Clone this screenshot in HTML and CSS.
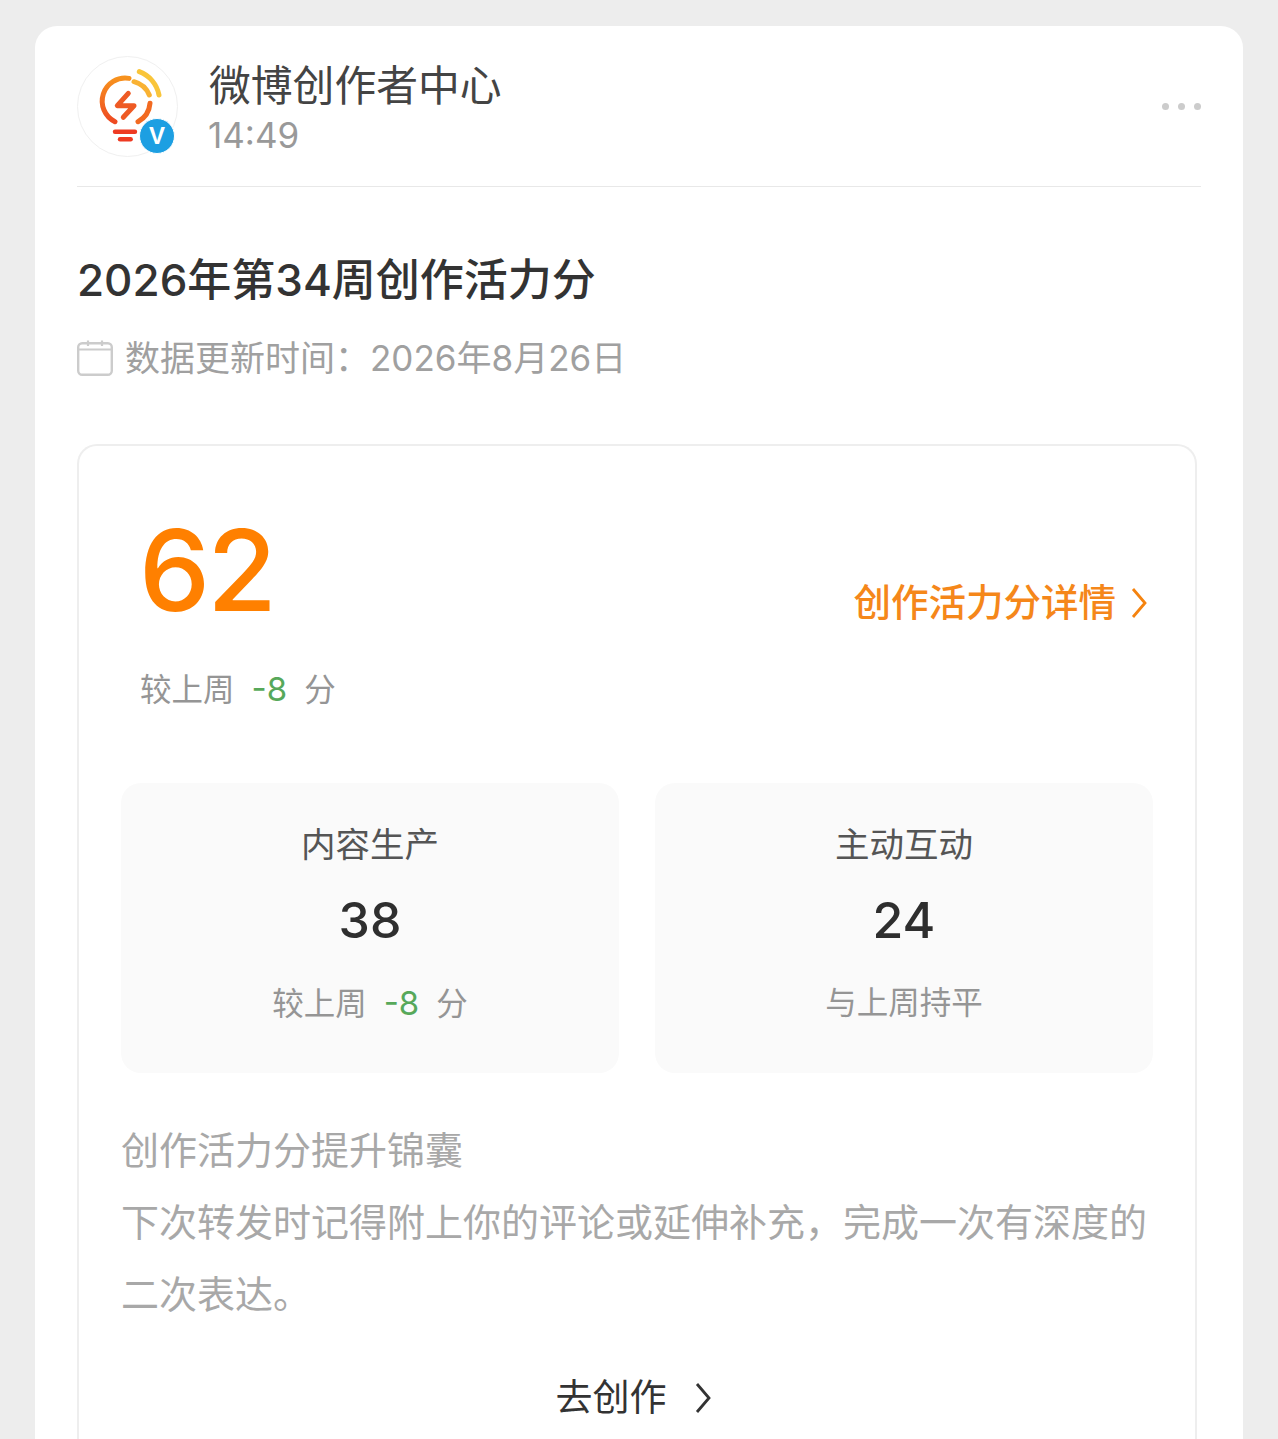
FILE: index.html
```html
<!DOCTYPE html>
<html lang="zh-CN">
<head>
    <meta charset="UTF-8">
    <title>微博创作者中心</title>
    <link rel="stylesheet" href="styles.css">
</head>
<body>
    <div id="card">
        <div class="head">
            <div class="avatar">
                <svg class="logo" viewBox="1 1 99 99" width="99" height="99">
                    <defs>
                        <linearGradient id="bulb" x1="0" y1="0" x2="0" y2="1">
                            <stop offset="0" stop-color="#f7921e"/>
                            <stop offset="1" stop-color="#ee4a22"/>
                        </linearGradient>
                    </defs>
                    <path d="M52 22.4A23 23 0 0 0 38 65.7" fill="none" stroke="url(#bulb)" stroke-width="5" stroke-linecap="round"/>
                    <path d="M61 65.7A23 23 0 0 0 73 47.3" fill="none" stroke="#f26a21" stroke-width="5" stroke-linecap="round"/>
                    <path d="M57 25.7A23 23 0 0 1 72.3 39" fill="none" stroke="#f9b233" stroke-width="5" stroke-linecap="round"/>
                    <path d="M62.3 15.7A31 31 0 0 1 82 39" fill="none" stroke="#f9c53a" stroke-width="5" stroke-linecap="round"/>
                    <path d="M51.3 37.3L40.3 49.7H57L46.3 61.3" fill="none" stroke="#ee5a24" stroke-width="5" stroke-linecap="round" stroke-linejoin="round"/>
                    <path d="M38 75.7H58" stroke="#ee3a22" stroke-width="4.4" stroke-linecap="round"/>
                    <path d="M43 83.3H53.7" stroke="#ee3a22" stroke-width="4.4" stroke-linecap="round"/>
                </svg>
                <span class="badge">V</span>
            </div>
            <div class="who">
                <div class="name">微博创作者中心</div>
                <div class="time">14:49</div>
            </div>
            <div class="more"><i></i><i></i><i></i></div>
        </div>

        <h1 class="title">2026年第34周创作活力分</h1>
        <div class="update">
            <svg viewBox="0 0 36 36" width="36" height="36">
                <rect x="1.2" y="3.2" width="33.6" height="31.6" rx="4" fill="none" stroke="#ccc" stroke-width="2.4"/>
                <path d="M1.5 9.5H34.5M11 0.5V6M25 0.5V6" fill="none" stroke="#ccc" stroke-width="2.2"/>
            </svg>
            <span>数据更新时间：2026年8月26日</span>
        </div>

        <div class="box">
            <div class="score">
                <div class="num">62</div>
                <div class="detail">创作活力分详情
                    <svg viewBox="0 0 18 32" width="18" height="32"><path d="M3 2L15 16L3 30" fill="none" stroke="#f5830f" stroke-width="2.8"/></svg>
                </div>
            </div>
            <div class="cmp">较上周<b>-8</b>分</div>

            <div class="stats">
                <div class="stat">
                    <div class="stat-name">内容生产</div>
                    <div class="stat-num">38</div>
                    <div class="cmp">较上周<b>-8</b>分</div>
                </div>
                <div class="stat">
                    <div class="stat-name">主动互动</div>
                    <div class="stat-num">24</div>
                    <div class="cmp">与上周持平</div>
                </div>
            </div>

            <div class="tips">
                <p>创作活力分提升锦囊</p>
                <p>下次转发时记得附上你的评论或延伸补充，完成一次有深度的二次表达。</p>
            </div>
            <div class="go">去创作
                <svg viewBox="0 0 18 32" width="18" height="32"><path d="M3 2L15 16L3 30" fill="none" stroke="#333" stroke-width="2.8"/></svg>
            </div>
        </div>
    </div>
</body>
</html>
```

FILE: styles.css
```css
*{margin: 0;padding: 0;box-sizing: border-box;}
html,body{height: 1439px;overflow: hidden;}
body{background: #ededed;font-family: "Inter","Noto Sans CJK SC",sans-serif;color: #333;}

#card{width: 1208px;height: 1413px;margin: 26px 0 0 35px;padding: 30px 42px 0;background: #fff;border-radius: 22px 22px 0 0;overflow: hidden;}

/*头部*/
.head{display: flex;align-items: center;height: 131px;padding-bottom: 30px;border-bottom: 1px solid #e8e8e8;}
.avatar{width: 101px;height: 101px;border: 1px solid #f0f0f0;border-radius: 50%;position: relative;flex: none;}
.logo{display: block;}
.badge{position: absolute;left: 61px;top: 61px;width: 36px;height: 36px;border: 1px solid #fff;border-radius: 50%;background: #1d9fe2;color: #fff;font: 700 24px/34px "Liberation Sans",sans-serif;text-align: center;}
.who{margin-left: 31px;flex: 1;}
.name{font-size: 41.8px;line-height: 60px;margin-top: 2px;color: #444;}
.time{margin-left: -1px;margin-top: -4px;font-size: 35px;line-height: 46px;color: #999;}
.more{display: flex;gap: 9px;}
.more i{width: 7px;height: 7px;border-radius: 50%;background: #ccc;}

.title{margin-top: 62px;font-size: 44px;line-height: 62px;font-weight: 500;color: #333;}

.update{display: flex;align-items: center;gap: 12px;margin-top: 17px;height: 54px;font-size: 35px;color: #a0a0a0;}
.update svg{flex: none;margin-top: 6px;}

/*活力分卡片*/
.box{width: 1120px;height: 1000px;margin-top: 62px;padding: 0 41px 0 42px;border: 2px solid #eee;border-bottom: 0;border-radius: 20px 20px 0 0;}
.score{display: flex;justify-content: space-between;align-items: flex-end;height: 187px;padding: 0 6px 0 18px;}
.num{font-size: 113px;line-height: 140px;color: #ff8000;font-weight: 500;margin-bottom: -7px;letter-spacing: -3px;}
.detail{display: flex;align-items: center;gap: 14px;font-size: 37.5px;font-weight: 500;line-height: 60px;color: #f5871a;}
.cmp{font-size: 31.5px;line-height: 46px;color: #959595;}
.box > .cmp{margin: 33px 0 0 19px;}
.cmp b{font-weight: 400;font-size: 33px;color: #57a85a;margin: 0 17px;}

.stats{display: grid;grid-template-columns: 498px 498px;gap: 36px;margin-top: 70px;}
.stat{height: 290px;padding-top: 37px;background: #fafafa;border-radius: 20px;text-align: center;}
.stat-name{font-size: 34.5px;line-height: 50px;color: #555;}
.stat-num{margin-top: 14px;font-size: 50px;line-height: 72px;font-weight: 500;color: #2e2e2e;}
.stat .cmp{margin-top: 24px;}

.tips{margin-top: 41px;font-size: 38px;line-height: 72px;color: #a8a8a8;}
.go{display: flex;justify-content: center;align-items: center;gap: 27px;margin-top: 38px;padding-right: 8px;font-size: 37px;line-height: 60px;color: #333;}
```
